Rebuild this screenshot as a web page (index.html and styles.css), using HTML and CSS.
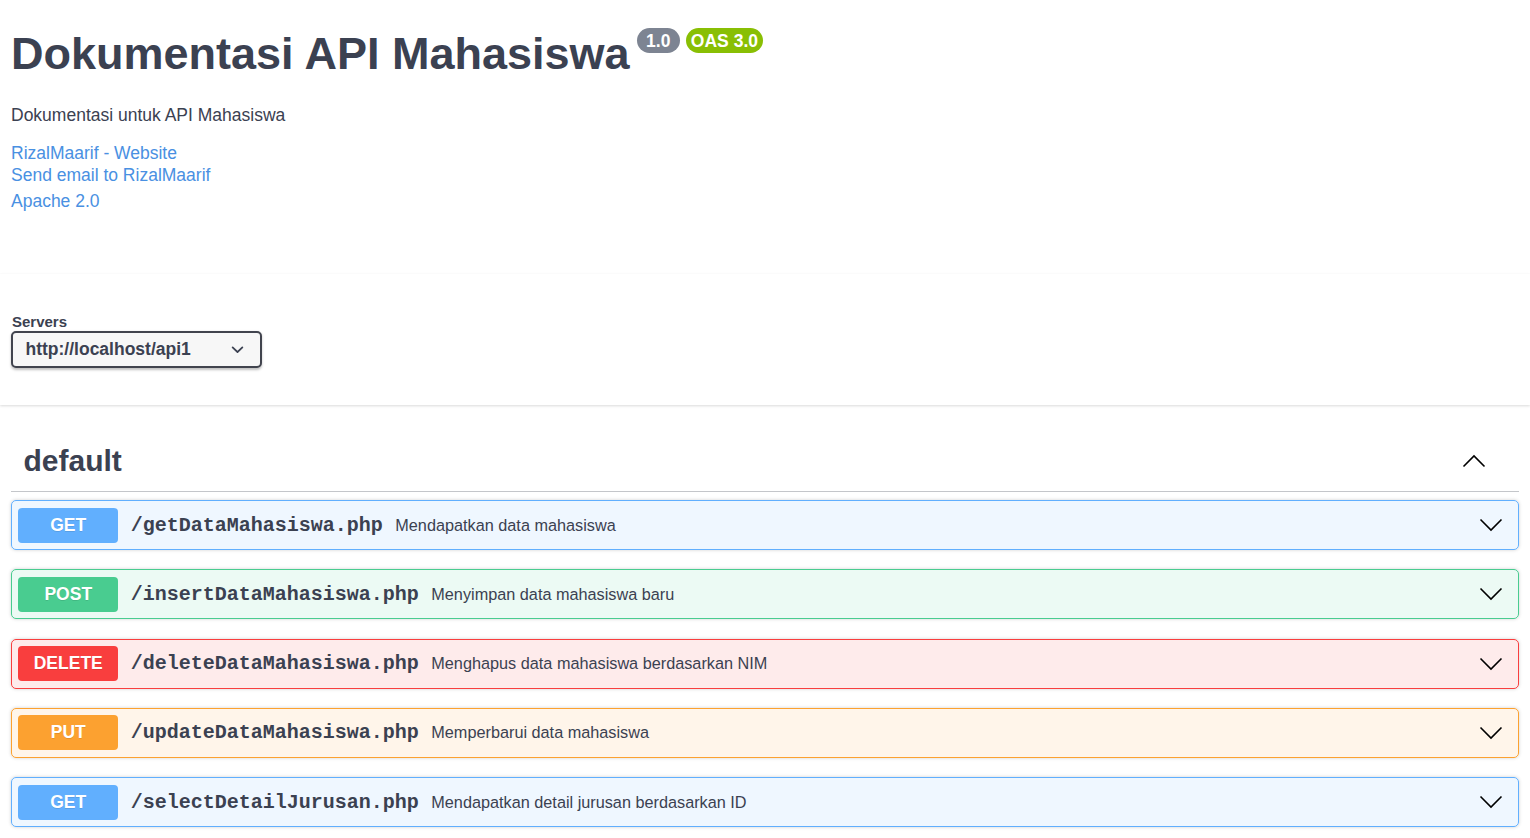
FILE: index.html
```html
<!DOCTYPE html>
<html lang="id">
<head>
<meta charset="utf-8">
<title>Dokumentasi API Mahasiswa</title>
<link rel="stylesheet" href="styles.css">
</head>
<body>
<div class="wrap info">
  <div class="title-row">
    <h2 class="title">Dokumentasi API Mahasiswa</h2>
    <span class="badge badge-version">1.0</span>
    <span class="badge badge-oas">OAS 3.0</span>
  </div>
  <p class="desc">Dokumentasi untuk API Mahasiswa</p>
  <div class="contact">
    <a href="#" class="link">RizalMaarif - Website</a>
    <a href="#" class="link">Send email to RizalMaarif</a>
  </div>
  <div class="license"><a href="#" class="link">Apache 2.0</a></div>
</div>

<div class="scheme">
  <div class="wrap">
    <div class="servers-title">Servers</div>
    <div class="select">
      <span>http://localhost/api1</span>
      <svg class="select-arrow" width="25" height="25" viewBox="0 0 20 20"><path fill="#3b4151" d="M13.418 7.859a.695.695 0 01.978 0 .68.68 0 010 .969l-3.908 3.830a.697.697 0 01-.979 0l-3.908-3.830a.68.68 0 010-.969.695.695 0 01.978 0L10 11l3.418-3.141z"/></svg>
    </div>
  </div>
</div>

<div class="wrap ops">
  <div class="tag">
    <span class="tag-name">default</span>
    <svg class="arrow" width="24" height="14" viewBox="0 0 24 14"><polyline points="1.5,12.5 12,2 22.5,12.5" fill="none" stroke="#000" stroke-width="1.6"/></svg>
  </div>

  <div class="opblock get">
    <span class="method">GET</span>
    <span class="path">/getDataMahasiswa.php</span>
    <span class="summary">Mendapatkan data mahasiswa</span>
    <svg class="arrow down" width="24" height="14" viewBox="0 0 24 14"><polyline points="1.5,1.5 12,12 22.5,1.5" fill="none" stroke="#000" stroke-width="1.6"/></svg>
  </div>

  <div class="opblock post">
    <span class="method">POST</span>
    <span class="path">/insertDataMahasiswa.php</span>
    <span class="summary">Menyimpan data mahasiswa baru</span>
    <svg class="arrow down" width="24" height="14" viewBox="0 0 24 14"><polyline points="1.5,1.5 12,12 22.5,1.5" fill="none" stroke="#000" stroke-width="1.6"/></svg>
  </div>

  <div class="opblock delete">
    <span class="method">DELETE</span>
    <span class="path">/deleteDataMahasiswa.php</span>
    <span class="summary">Menghapus data mahasiswa berdasarkan NIM</span>
    <svg class="arrow down" width="24" height="14" viewBox="0 0 24 14"><polyline points="1.5,1.5 12,12 22.5,1.5" fill="none" stroke="#000" stroke-width="1.6"/></svg>
  </div>

  <div class="opblock put">
    <span class="method">PUT</span>
    <span class="path">/updateDataMahasiswa.php</span>
    <span class="summary">Memperbarui data mahasiswa</span>
    <svg class="arrow down" width="24" height="14" viewBox="0 0 24 14"><polyline points="1.5,1.5 12,12 22.5,1.5" fill="none" stroke="#000" stroke-width="1.6"/></svg>
  </div>

  <div class="opblock get">
    <span class="method">GET</span>
    <span class="path">/selectDetailJurusan.php</span>
    <span class="summary">Mendapatkan detail jurusan berdasarkan ID</span>
    <svg class="arrow down" width="24" height="14" viewBox="0 0 24 14"><polyline points="1.5,1.5 12,12 22.5,1.5" fill="none" stroke="#000" stroke-width="1.6"/></svg>
  </div>
</div>
</body>
</html>
```

FILE: styles.css
```css
html, body {
  margin: 0;
  padding: 0;
  background: #fff;
}
body {
  font-family: "Liberation Sans", Arial, sans-serif;
  color: #3b4151;
}
.wrap {
  padding: 0 11px;
}

/* info */
.info {
  padding-top: 28px;
  height: 274px;
  box-sizing: border-box;
}
.title-row {
  display: flex;
  align-items: flex-start;
}
.title {
  margin: 0;
  font-size: 45px;
  line-height: 52px;
  font-weight: 700;
  color: #3b4151;
}
.badge {
  display: inline-block;
  color: #fff;
  font-weight: 700;
  font-size: 17.5px;
  line-height: 20px;
  padding: 2.5px 5px;
  border-radius: 70px;
  margin-top: 0;
}
.badge-version {
  background: #7d8492;
  margin-left: 7px;
  padding-left: 9.5px;
  padding-right: 9.5px;
}
.badge-oas {
  background: #89bf04;
  margin-left: 6px;
}
.desc {
  margin: 25px 0 0;
  font-size: 17.5px;
  line-height: 20px;
}
.contact {
  margin-top: 17px;
  display: flex;
  flex-direction: column;
}
.link {
  color: #4990e2;
  text-decoration: none;
  font-size: 17.5px;
  line-height: 22px;
}
.license {
  margin-top: 4px;
}

/* servers */
.scheme {
  background: #fff;
  box-shadow: 0 1.25px 2.5px 0 rgba(0, 0, 0, 0.15);
  padding: 39px 0 37px;
}
.servers-title {
  font-size: 15px;
  font-weight: 700;
  line-height: 17px;
  margin-left: 1px;
  margin-bottom: 1px;
}
.select {
  display: flex;
  align-items: center;
  justify-content: space-between;
  width: 251px;
  height: 37px;
  box-sizing: border-box;
  padding: 0 10.5px 0 12.5px;
  border: 2px solid #41444e;
  border-radius: 5px;
  background: #f7f7f7;
  box-shadow: 0 1.25px 2.5px 0 rgba(0, 0, 0, 0.25);
  font-size: 17.5px;
  font-weight: 700;
  color: #3b4151;
}
.select-arrow {
  display: block;
}

/* operations */
.ops {
  padding-top: 25px;
}
.tag {
  display: flex;
  align-items: center;
  justify-content: space-between;
  padding: 12.5px 33px 12.5px 12.5px;
  border-bottom: 1px solid rgba(59, 65, 81, 0.3);
  margin-bottom: 8px;
}
.tag-name {
  font-size: 30px;
  line-height: 36px;
  font-weight: 700;
}
.arrow {
  display: block;
  flex: none;
}
.opblock {
  display: flex;
  align-items: center;
  box-sizing: border-box;
  height: 50px;
  padding: 0 15px 0 6.25px;
  margin-bottom: 19.25px;
  border: 1px solid;
  border-radius: 5px;
  box-shadow: 0 0 3.75px rgba(0, 0, 0, 0.19);
}
.method {
  flex: none;
  width: 100px;
  height: 35px;
  line-height: 35px;
  text-align: center;
  border-radius: 4px;
  color: #fff;
  font-size: 17.5px;
  font-weight: 700;
  text-shadow: 0 1px 0 rgba(0, 0, 0, 0.1);
}
.path {
  padding: 0 12.5px;
  font-family: "Liberation Mono", "Courier New", monospace;
  font-weight: 700;
  font-size: 20px;
  color: #3b4151;
}
.summary {
  flex: 1 1 auto;
  font-size: 16.25px;
  color: #3b4151;
}
.get { background: rgba(97, 175, 254, 0.1); border-color: #61affe; }
.get .method { background: #61affe; }
.post { background: rgba(73, 204, 144, 0.1); border-color: #49cc90; }
.post .method { background: #49cc90; }
.delete { background: rgba(249, 62, 62, 0.1); border-color: #f93e3e; }
.delete .method { background: #f93e3e; }
.put { background: rgba(252, 161, 48, 0.1); border-color: #fca130; }
.put .method { background: #fca130; }
```
